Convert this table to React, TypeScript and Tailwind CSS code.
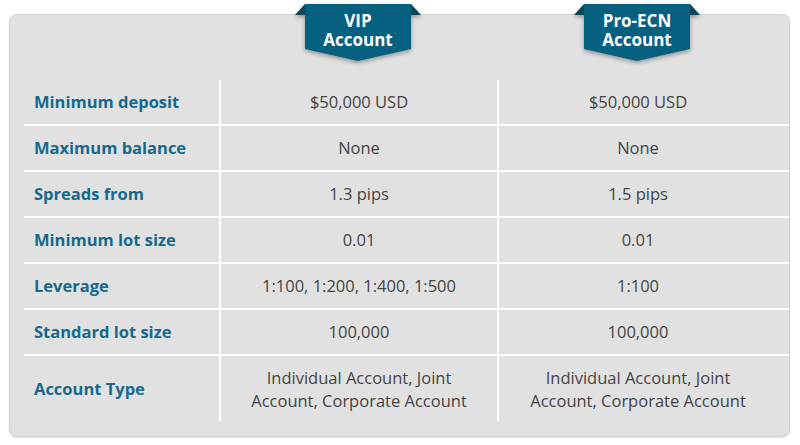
import React from "react";

const rows: { label: string; vip: React.ReactNode; ecn: React.ReactNode }[] = [
  { label: "Minimum deposit", vip: "$50,000 USD", ecn: "$50,000 USD" },
  { label: "Maximum balance", vip: "None", ecn: "None" },
  { label: "Spreads from", vip: "1.3 pips", ecn: "1.5 pips" },
  { label: "Minimum lot size", vip: "0.01", ecn: "0.01" },
  { label: "Leverage", vip: "1:100, 1:200, 1:400, 1:500", ecn: "1:100" },
  { label: "Standard lot size", vip: "100,000", ecn: "100,000" },
];

const Badge = ({ top, bottom }: { top: string; bottom: string }) => (
  <div className="relative -mt-[11px] mx-auto w-[126px] h-[62px]">
    <svg
      className="absolute inset-0 drop-shadow-[0_2px_2px_rgba(0,0,0,0.35)]"
      width="126"
      height="62"
      viewBox="0 0 126 62"
    >
      <polygon points="0,11 10,0 10,11" fill="#0b4659" />
      <polygon points="126,11 116,0 116,11" fill="#0b4659" />
      <polygon points="10,0 116,0 116,45 63,57 10,45" fill="#06607f" />
    </svg>
    <div className="relative pt-[7px] text-center text-white font-bold text-[17px] leading-[19px]">
      <div>{top}</div>
      <div>{bottom}</div>
    </div>
  </div>
);

const App = () => {
  return (
    <div className="w-[800px] h-[445px] bg-white pt-[14px] pl-[9px] font-['Open_Sans',sans-serif]">
      <div className="w-[781px] h-[423px] rounded-lg border border-[#d2d2d2] bg-[#e1e1e1] shadow-[0_1px_2px_rgba(0,0,0,0.12)] pl-[14px]">
        <div className="grid grid-cols-[195px_278px_280px] h-[65px]">
          <div />
          <Badge top="VIP" bottom="Account" />
          <Badge top="Pro-ECN" bottom="Account" />
        </div>
        {rows.map((r) => (
          <div
            key={r.label}
            className="grid grid-cols-[195px_278px_280px] h-[46px] border-b-2 border-white text-[16.5px]"
          >
            <div className="flex items-center pl-[10px] font-bold text-[#16698c]">
              {r.label}
            </div>
            <div className="flex items-center justify-center border-l-2 border-white text-[#444444]">
              {r.vip}
            </div>
            <div className="flex items-center justify-center border-l-2 border-white text-[#444444]">
              {r.ecn}
            </div>
          </div>
        ))}
        <div className="grid grid-cols-[195px_278px_280px] h-[65px] text-[16.5px] leading-[23px]">
          <div className="flex items-center pl-[10px] font-bold text-[#16698c]">
            Account Type
          </div>
          <div className="flex flex-col items-center justify-center border-l-2 border-white text-center text-[#444444]">
            <span>Individual Account, Joint</span>
            <span>Account, Corporate Account</span>
          </div>
          <div className="flex flex-col items-center justify-center border-l-2 border-white text-center text-[#444444]">
            <span>Individual Account, Joint</span>
            <span>Account, Corporate Account</span>
          </div>
        </div>
      </div>
    </div>
  );
};

export default App;
